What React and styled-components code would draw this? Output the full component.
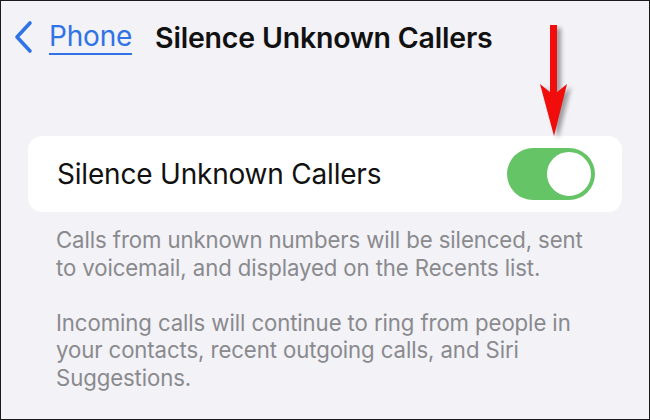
import React, { useState } from 'react';
import styled, { createGlobalStyle } from 'styled-components';

const GlobalStyle = createGlobalStyle`
  html, body {
    margin: 0;
    padding: 0;
    background: #f2f2f7;
  }
  * {
    box-sizing: border-box;
  }
`;

const Screen = styled.div`
  position: relative;
  width: 650px;
  height: 420px;
  border: 1px solid #1a1a1a;
  background: #f2f2f7;
  font-family: Inter, "Noto Sans", sans-serif;
  overflow: hidden;
`;

const NavBar = styled.div`
  display: flex;
  align-items: center;
  height: 72px;
  padding-left: 11px;
`;

const BackLink = styled.a`
  display: flex;
  align-items: center;
  gap: 15px;
  color: #2f73e6;
  text-decoration: none;
  cursor: pointer;
`;

const BackLabel = styled.span`
  font-size: 28px;
  line-height: 32px;
  letter-spacing: -0.2px;
  border-bottom: 2px solid #2f73e6;
  padding-bottom: 1px;
`;

const Title = styled.h1`
  margin: 0 0 0 23px;
  font-size: 28.5px;
  font-weight: 600;
  color: #111;
  letter-spacing: -0.2px;
`;

const Content = styled.div`
  padding: 63px 27px 0 27px;
`;

const Card = styled.div`
  display: flex;
  align-items: center;
  justify-content: space-between;
  height: 76px;
  padding: 0 27px 0 29px;
  background: #fff;
  border-radius: 14px;
`;

const RowLabel = styled.span`
  font-size: 28px;
  color: #111;
  letter-spacing: -0.2px;
`;

const Switch = styled.button`
  position: relative;
  width: 88px;
  height: 52px;
  padding: 0;
  border: none;
  border-radius: 26px;
  background: ${(p) => (p.on ? '#65c466' : '#e5e5ea')};
  cursor: pointer;
`;

const Knob = styled.span`
  position: absolute;
  top: 2px;
  left: ${(p) => (p.on ? '38px' : '2px')};
  width: 48px;
  height: 48px;
  border-radius: 50%;
  background: #fff;
  border: 2.5px solid #65c466;
`;

const Footer = styled.div`
  padding: 14px 0 0 55px;
  color: #8a8a8e;
  font-size: 22.2px;
  line-height: 27.5px;
  letter-spacing: -0.1px;
`;

const Para = styled.p`
  margin: 0 0 27.5px 0;
  max-width: 545px;
`;

const Pointer = styled.svg`
  position: absolute;
  left: 536px;
  top: 22px;
  filter: drop-shadow(4px 3px 2px rgba(0, 0, 0, 0.35));
`;

function Chevron() {
  return (
    <svg width="22" height="34" viewBox="0 0 22 34">
      <path
        d="M18 3 L5 17 L18 31"
        fill="none"
        stroke="#2f73e6"
        strokeWidth="3.6"
        strokeLinecap="round"
        strokeLinejoin="round"
      />
    </svg>
  );
}

export default function App() {
  const [silence, setSilence] = useState(true);

  return (
    <Screen>
      <GlobalStyle />
      <NavBar>
        <BackLink>
          <Chevron />
          <BackLabel>Phone</BackLabel>
        </BackLink>
        <Title>Silence Unknown Callers</Title>
      </NavBar>
      <Content>
        <Card>
          <RowLabel>Silence Unknown Callers</RowLabel>
          <Switch on={silence ? 1 : 0} onClick={() => setSilence(!silence)}>
            <Knob on={silence ? 1 : 0} />
          </Switch>
        </Card>
      </Content>
      <Footer>
        <Para>
          Calls from unknown numbers will be silenced, sent to voicemail, and
          displayed on the Recents list.
        </Para>
        <Para>
          Incoming calls will continue to ring from people in your contacts,
          recent outgoing calls, and Siri Suggestions.
        </Para>
      </Footer>
      <Pointer width="34" height="118" viewBox="0 0 34 118">
        <rect x="13" y="2" width="7" height="70" fill="#f20d0d" />
        <path d="M3 61 L16.5 72 L30 61 L17 113 Z" fill="#f20d0d" />
      </Pointer>
    </Screen>
  );
}
